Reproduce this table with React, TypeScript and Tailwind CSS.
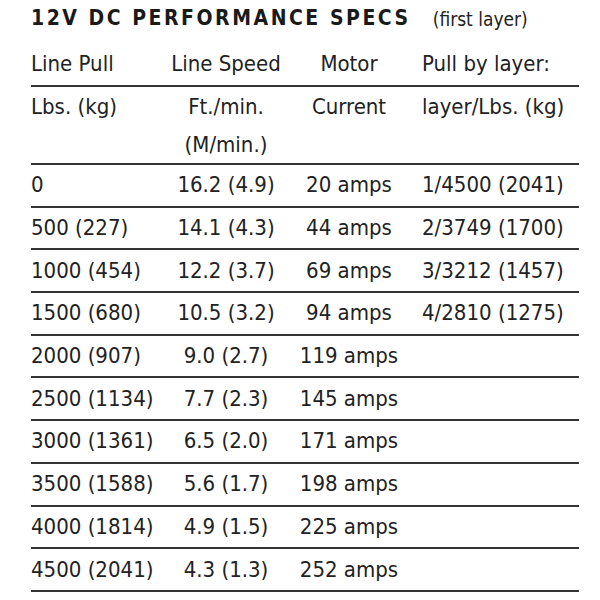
const rows: [string, string, string, string][] = [
  ["0", "16.2 (4.9)", "20 amps", "1/4500 (2041)"],
  ["500 (227)", "14.1 (4.3)", "44 amps", "2/3749 (1700)"],
  ["1000 (454)", "12.2 (3.7)", "69 amps", "3/3212 (1457)"],
  ["1500 (680)", "10.5 (3.2)", "94 amps", "4/2810 (1275)"],
  ["2000 (907)", "9.0 (2.7)", "119 amps", ""],
  ["2500 (1134)", "7.7 (2.3)", "145 amps", ""],
  ["3000 (1361)", "6.5 (2.0)", "171 amps", ""],
  ["3500 (1588)", "5.6 (1.7)", "198 amps", ""],
  ["4000 (1814)", "4.9 (1.5)", "225 amps", ""],
  ["4500 (2041)", "4.3 (1.3)", "252 amps", ""],
];

const cols = "grid grid-cols-[140px_110px_136px_1fr] whitespace-nowrap";

export default function App() {
  return (
    <div className="h-[600px] w-[600px] bg-white pl-[31px] pr-[21px] font-['DejaVu_Sans_Condensed','DejaVu_Sans',sans-serif] text-[#222]">
      <div className="flex h-[36px] items-end pb-[7px] whitespace-nowrap">
        <h1 className="text-[21px] font-bold leading-none tracking-[0.12em] text-[#1a1a1a]">
          12V DC PERFORMANCE SPECS
        </h1>
        <span className="ml-[22px] text-[19px] leading-none">(first layer)</span>
      </div>

      <div className={`${cols} h-[51px] items-end border-b-2 border-[#333] pb-[10px] text-[22px] leading-none`}>
        <span>Line Pull</span>
        <span className="text-center">Line Speed</span>
        <span className="text-center">Motor</span>
        <span className="pl-[5px]">Pull by layer:</span>
      </div>

      <div className={`${cols} h-[78px] border-b-2 border-[#333] pt-[1px] text-[22px] leading-[38px]`}>
        <span>Lbs. (kg)</span>
        <span className="text-center">
          Ft./min.
          <br />
          (M/min.)
        </span>
        <span className="text-center">Current</span>
        <span className="pl-[5px]">layer/Lbs. (kg)</span>
      </div>

      {rows.map((r) => (
        <div
          key={r[0]}
          className={`${cols} h-[42.7px] items-center border-b-2 border-[#333] text-[22px] leading-none`}
        >
          <span>{r[0]}</span>
          <span className="text-center">{r[1]}</span>
          <span className="text-center">{r[2]}</span>
          <span className="pl-[5px]">{r[3]}</span>
        </div>
      ))}
    </div>
  );
}
